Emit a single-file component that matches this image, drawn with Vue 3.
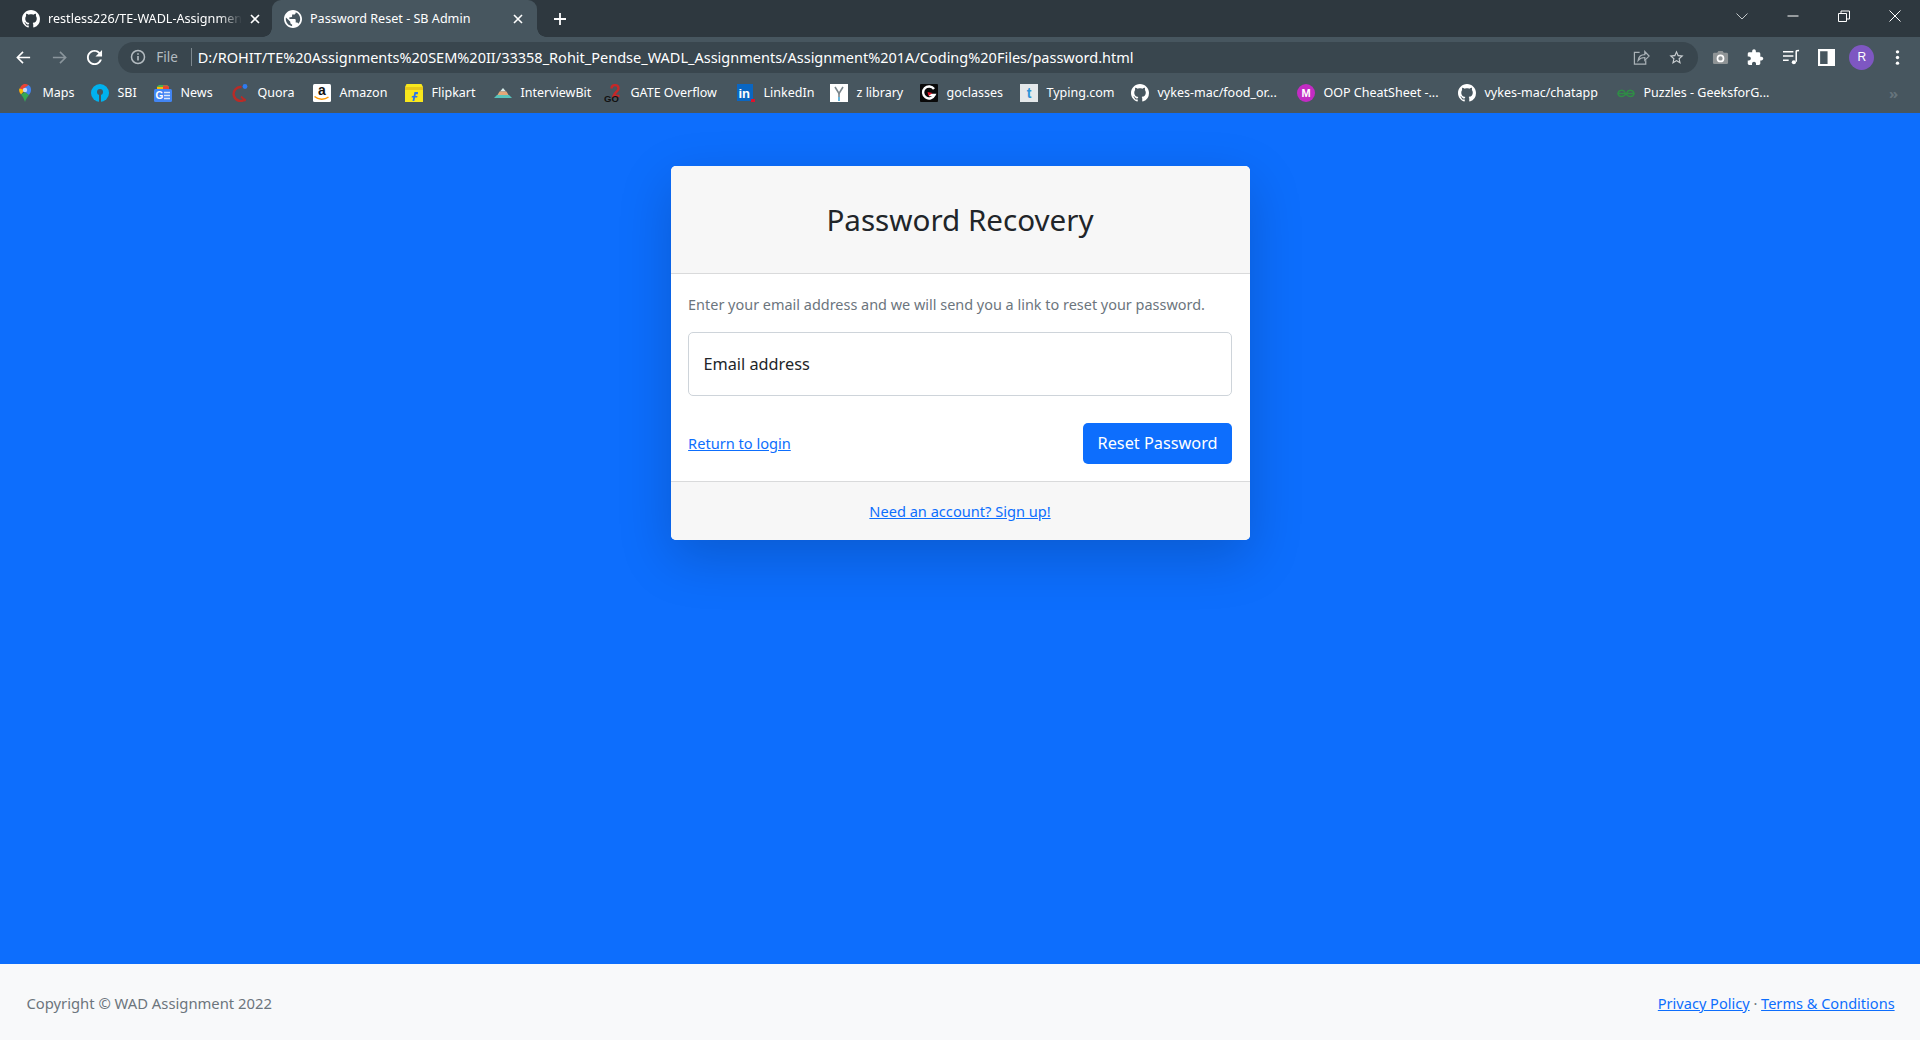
<script setup>
const github = 'M8 0C3.58 0 0 3.58 0 8c0 3.54 2.29 6.53 5.47 7.59.4.07.55-.17.55-.38 0-.19-.01-.82-.01-1.49-2.01.37-2.53-.49-2.69-.94-.09-.23-.48-.94-.82-1.13-.28-.15-.68-.52-.01-.53.63-.01 1.08.58 1.23.82.72 1.21 1.87.87 2.33.66.07-.52.28-.87.51-1.07-1.78-.2-3.64-.89-3.64-3.95 0-.87.31-1.59.82-2.15-.08-.2-.36-1.02.08-2.12 0 0 .67-.21 2.2.82.64-.18 1.32-.27 2-.27.68 0 1.36.09 2 .27 1.53-1.04 2.2-.82 2.2-.82.44 1.1.16 1.92.08 2.12.51.56.82 1.27.82 2.15 0 3.07-1.87 3.75-3.65 3.95.29.25.54.73.54 1.48 0 1.07-.01 1.93-.01 2.2 0 .21.15.46.55.38A8.013 8.013 0 0016 8c0-4.42-3.58-8-8-8z'

const bookmarks = [
  { icon: 'maps', label: 'Maps', w: 75 },
  { icon: 'sbi', label: 'SBI', w: 63 },
  { icon: 'news', label: 'News', w: 77 },
  { icon: 'quora', label: 'Quora', w: 82 },
  { icon: 'amazon', label: 'Amazon', w: 92 },
  { icon: 'flipkart', label: 'Flipkart', w: 89 },
  { icon: 'ib', label: 'InterviewBit', w: 110 },
  { icon: 'gate', label: 'GATE Overflow', w: 133 },
  { icon: 'linkedin', label: 'LinkedIn', w: 93 },
  { icon: 'zlib', label: 'z library', w: 90 },
  { icon: 'go', label: 'goclasses', w: 100 },
  { icon: 'typing', label: 'Typing.com', w: 111 },
  { icon: 'github', label: 'vykes-mac/food_or...', w: 166 },
  { icon: 'oop', label: 'OOP CheatSheet -...', w: 161 },
  { icon: 'github', label: 'vykes-mac/chatapp', w: 159 },
  { icon: 'gfg', label: 'Puzzles - GeeksforG...', w: 200 }
]
</script>

<template>
  <div class="page">
    <header class="chrome">
      <div class="tabstrip">
        <div class="tab">
          <svg class="tab-icon" viewBox="0 0 16 16"><path :d="github" fill="#fff" /></svg>
          <span class="tab-title fade">restless226/TE-WADL-Assignmen</span>
          <svg class="tab-close" viewBox="0 0 10 10"><path d="M1 1l8 8M9 1l-8 8" /></svg>
        </div>
        <div class="tab active">
          <svg class="tab-icon" viewBox="2 2 20 20"><path fill="#fff" d="M12 2C6.48 2 2 6.48 2 12s4.48 10 10 10 10-4.48 10-10S17.52 2 12 2zm-1 17.93c-3.95-.49-7-3.85-7-7.93 0-.62.08-1.21.21-1.79L9 15v1c0 1.1.9 2 2 2v1.93zm6.9-2.54c-.26-.81-1-1.39-1.9-1.39h-1v-3c0-.55-.45-1-1-1H8v-2h2c.55 0 1-.45 1-1V7h2c1.1 0 2-.9 2-2v-.41c2.93 1.19 5 4.06 5 7.41 0 2.08-.8 3.97-2.1 5.39z" /></svg>
          <span class="tab-title">Password Reset - SB Admin</span>
          <svg class="tab-close" viewBox="0 0 10 10"><path d="M1 1l8 8M9 1l-8 8" /></svg>
        </div>
        <svg class="new-tab" viewBox="0 0 14 14"><path d="M7 1v12M1 7h12" /></svg>
        <div class="win-controls">
          <svg class="win" viewBox="0 0 14 14"><path d="M1.500 4.500L7 10l5.500-5.500" /></svg>
          <svg class="win" viewBox="0 0 14 14"><path d="M1.500 7h11" /></svg>
          <svg class="win" viewBox="0 0 14 14"><path d="M1.500 4.500h8v8h-8zM4 4.500V2h8.500v8H9.500" /></svg>
          <svg class="win" viewBox="0 0 14 14"><path d="M1.500 1.500l11 11M12.500 1.500l-11 11" /></svg>
        </div>
      </div>

      <div class="toolbar">
        <button class="tool">
          <svg viewBox="0 0 18 18" class="stroke"><path d="M16 9H2.500M8.500 3L2.500 9l6 6" /></svg>
        </button>
        <button class="tool">
          <svg viewBox="0 0 18 18" class="stroke dim"><path d="M2 9h13.500M9.500 3l6 6-6 6" /></svg>
        </button>
        <button class="tool">
          <svg viewBox="3 3 18 18"><path fill="#fff" d="M17.650 6.350C16.200 4.900 14.210 4 12 4c-4.420 0-7.990 3.580-7.990 8s3.570 8 7.990 8c3.730 0 6.840-2.550 7.730-6h-2.080c-.82 2.330-3.040 4-5.650 4-3.310 0-6-2.690-6-6s2.690-6 6-6c1.660 0 3.140.69 4.220 1.780L13 11h7V4l-2.350 2.350z" /></svg>
        </button>

        <div class="omnibox">
          <svg class="info" viewBox="0 0 16 16">
            <circle cx="8" cy="8" r="6.500" fill="none" stroke="#b4bcc1" stroke-width="1.500" />
            <path d="M8 7v4.500M8 4.300v1.400" stroke="#b4bcc1" stroke-width="1.600" />
          </svg>
          <span class="scheme">File</span>
          <span class="sep"></span>
          <span class="url">D:/ROHIT/TE%20Assignments%20SEM%20II/33358_Rohit_Pendse_WADL_Assignments/Assignment%201A/Coding%20Files/password.html</span>
          <svg class="omni-icon" viewBox="0 0 18 18" fill="none" stroke="#aab2b7" stroke-width="1.300">
            <path d="M7 3.500H1.500v12.500h12v-4" />
            <path d="M5.500 12c.5-4 3-6 7-6V2.800L17 7.500l-4.500 4.500V9c-3 0-5.500 1-7 3z" />
          </svg>
          <svg class="omni-icon star" viewBox="0 0 24 24"><path fill="#c9ced1" d="M22 9.240l-7.190-.62L12 2 9.190 8.630 2 9.240l5.460 4.730L5.820 21 12 17.270 18.180 21l-1.630-7.030L22 9.240zM12 15.400l-3.760 2.270 1-4.280-3.320-2.880 4.380-.38L12 6.100l1.710 4.040 4.380.38-3.320 2.880 1 4.280L12 15.400z" /></svg>
        </div>

        <div class="extensions">
          <button class="tool">
            <svg viewBox="0 0 18 16"><path fill="#8f9496" d="M2.500 3h3l1.300-2h4.400l1.300 2h3A1.500 1.500 0 0 1 17 4.500v9a1.500 1.500 0 0 1-1.500 1.500h-13A1.500 1.500 0 0 1 1 13.500v-9A1.500 1.500 0 0 1 2.500 3z" /><circle cx="9" cy="9" r="3.200" fill="none" stroke="#fff" stroke-width="1.800" /></svg>
          </button>
          <button class="tool">
            <svg viewBox="1 1 23 22"><path fill="#fff" d="M20.500 11H19V7c0-1.100-.9-2-2-2h-4V3.500C13 2.120 11.880 1 10.500 1S8 2.120 8 3.500V5H4c-1.100 0-1.990.9-1.990 2v3.800H3.500c1.490 0 2.700 1.210 2.700 2.700s-1.210 2.700-2.700 2.700H2V20c0 1.100.9 2 2 2h3.800v-1.500c0-1.490 1.210-2.700 2.700-2.700 1.490 0 2.700 1.210 2.700 2.700V22H17c1.100 0 2-.9 2-2v-4h1.500c1.380 0 2.500-1.120 2.500-2.500S21.880 11 20.500 11z" /></svg>
          </button>
          <button class="tool">
            <svg viewBox="0 0 18 16" fill="none" stroke="#fff" stroke-width="1.600">
              <path d="M0 2h11M0 6.500h11M0 11h6" />
              <path d="M14 12.500V1.500c0-.6.6-.8 3-.8" />
              <circle cx="11.500" cy="13" r="2.200" fill="#fff" stroke="none" />
            </svg>
          </button>
          <button class="tool">
            <svg viewBox="0 0 16 16"><path fill="#fff" fill-rule="evenodd" d="M0 0h16v16H0zM2 2v12h7V2z" /></svg>
          </button>
          <button class="tool">
            <span class="avatar">R</span>
          </button>
          <button class="tool">
            <svg viewBox="0 0 18 18"><circle cx="9" cy="3" r="1.800" fill="#fff" /><circle cx="9" cy="9" r="1.800" fill="#fff" /><circle cx="9" cy="15" r="1.800" fill="#fff" /></svg>
          </button>
        </div>
      </div>

      <div class="bookmarks">
        <a v-for="b in bookmarks" :key="b.label" class="bookmark" :style="{ width: b.w + 'px' }">
          <svg class="bm-icon" viewBox="0 0 18 18">
            <g v-if="b.icon === 'maps'">
              <path d="M3.800 9L9 3.500 13 1.500C11.800.5 10.500 0 9 0 6.500 0 3 2.500 3.800 9z" fill="#ea4335" />
              <path d="M3.300 4.500C2.800 7 3.600 8.500 5 10.500L9 6z" fill="#fbbc04" />
              <path d="M5 10.500c1.500 2 3 3.500 4 7.500 1-3.500 2.500-5 4-7L9 8z" fill="#34a853" />
              <path d="M9 3.500L12.500 1C14.500 2.500 15 4 15 6c0 2-1 3.500-2 5L9 8z" fill="#4285f4" />
              <circle cx="9" cy="6" r="2.200" fill="#c9d6f5" />
            </g>
            <g v-else-if="b.icon === 'sbi'">
              <circle cx="9" cy="9" r="9" fill="#00b1ee" />
              <circle cx="9" cy="8" r="3" fill="#47565f" />
              <rect x="8" y="9" width="2" height="9" fill="#47565f" />
            </g>
            <g v-else-if="b.icon === 'news'">
              <path d="M3 5V2.500L5 1h8l2 1.500V5z" fill="#4caf50" />
              <path d="M3 5V3h7v2z" fill="#fbbc04" />
              <path d="M9 5V1.500h4.500L15 3v2z" fill="#e74335" />
              <rect y="5" width="18" height="13" rx="1.500" fill="#4285f4" />
              <text x="1.500" y="15" class="news-g">G</text>
              <path d="M10 8.500h6M10 11.500h6M10 14.500h6" stroke="#dbe6fb" stroke-width="1.500" />
            </g>
            <g v-else-if="b.icon === 'quora'">
              <path d="M10.500 3A7 7 0 1 0 14.500 15" fill="none" stroke="#b92b27" stroke-width="2.400" />
              <path d="M10 12.500l4.500 4.500" stroke="#b92b27" stroke-width="1.800" />
              <circle cx="14" cy="2.500" r="2.400" fill="#2f7bf0" />
            </g>
            <g v-else-if="b.icon === 'amazon'">
              <rect width="18" height="18" rx="1.500" fill="#fff" />
              <text x="9" y="11" class="amz">a</text>
              <path d="M1.500 12.500c4 3.500 10 3.500 14 .5" fill="none" stroke="#f90" stroke-width="1.500" />
            </g>
            <g v-else-if="b.icon === 'flipkart'">
              <path d="M0 3L1.500 0h15L18 3v15H0z" fill="#f8e71c" />
              <path d="M0 3h18v3H0z" fill="#e8c71a" />
              <path d="M13 8h-3.500L8.600 12H7l-.4 1.500h1.700L7.500 17h1.800l.8-3.500h2l.4-1.500h-2l.3-1.700h2z" fill="#2874f0" />
            </g>
            <g v-else-if="b.icon === 'ib'">
              <path d="M9 4l3 3.500H6z" fill="#d7ebe9" />
              <path d="M5.500 7.500h7L14.500 11h-11z" fill="#e4a878" />
              <path d="M3 11h12l3 3H0z" fill="#58c4bb" />
            </g>
            <g v-else-if="b.icon === 'gate'">
              <path d="M7.500 4.500c0-4.500 7-4.500 7 0 0 2.500-3.500 3.500-5 7.500h6" fill="none" stroke="#c62828" stroke-width="2.400" />
              <text x="0" y="18" class="gate-t">GO</text>
            </g>
            <g v-else-if="b.icon === 'linkedin'">
              <rect width="16" height="17" fill="#0a66c2" />
              <text x="1.500" y="14" class="li-t">in</text>
              <rect x="14" y="15" width="4" height="3" fill="#e0102a" />
            </g>
            <g v-else-if="b.icon === 'zlib'">
              <rect width="18" height="18" fill="#fff" />
              <path d="M5 3l4 6.500L13 3" fill="none" stroke="#7a868c" stroke-width="1.600" />
              <path d="M9 9v4" stroke="#7a868c" stroke-width="1.600" />
              <path d="M9 13v4" stroke="#42a5d5" stroke-width="1.600" />
            </g>
            <g v-else-if="b.icon === 'go'">
              <rect width="18" height="18" rx="1" fill="#0a0a0a" />
              <path d="M14 5A6 6 0 1 0 14.500 11H9" fill="none" stroke="#fff" stroke-width="2.400" />
              <path d="M7.500 8l5 1-4 3z" fill="#e01a2b" />
            </g>
            <g v-else-if="b.icon === 'typing'">
              <rect width="18" height="18" fill="#e4e8ea" />
              <text x="9" y="14" class="ty-t">t</text>
            </g>
            <path v-else-if="b.icon === 'github'" :d="github" transform="scale(1.125)" fill="#fff" />
            <g v-else-if="b.icon === 'oop'">
              <circle cx="9" cy="9" r="9" fill="#c32bc4" />
              <text x="9" y="13" class="oop-t">M</text>
            </g>
            <g v-else-if="b.icon === 'gfg'" fill="none" stroke="#2f8d46" stroke-width="1.500">
              <path d="M9 9.500H1c.5-4 6-4 7-1M9 9.500h8c-.5-4-6-4-7-1" />
              <path d="M1 9.500c.5 4 6 4 8 0 2 4 7.500 4 8 0" />
            </g>
          </svg>
          <span class="bm-label">{{ b.label }}</span>
        </a>
        <span class="more">»</span>
      </div>
    </header>

    <div class="layout">
      <main class="content">
        <div class="card">
          <div class="card-header">
            <h3>Password Recovery</h3>
          </div>
          <div class="card-body">
            <div class="hint">Enter your email address and we will send you a link to reset your password.</div>
            <input class="email" type="email" placeholder="Email address" />
            <div class="actions">
              <a class="link small" href="#">Return to login</a>
              <a class="btn" href="#">Reset Password</a>
            </div>
          </div>
          <div class="card-footer">
            <a class="link small" href="#">Need an account? Sign up!</a>
          </div>
        </div>
      </main>

      <footer class="site-footer">
        <div class="muted">Copyright © WAD Assignment 2022</div>
        <div class="muted legal">
          <a class="link" href="#">Privacy Policy</a>
          &middot;
          <a class="link" href="#">Terms &amp; Conditions</a>
        </div>
      </footer>
    </div>
  </div>
</template>

<style scoped>
.page {
  display: flex;
  flex-direction: column;
  height: 1040px;
  overflow: hidden;
  font-family: "Noto Sans", "Liberation Sans", sans-serif;
}

.chrome {
  flex: none;
  color: #fff;
  background: #47565f;
}

.tabstrip {
  display: flex;
  align-items: stretch;
  height: 37px;
  padding-left: 8px;
  background: #2e383f;
}

.tab {
  display: flex;
  flex: none;
  align-items: center;
  box-sizing: border-box;
  width: 264px;
  padding: 0 12px 0 14px;
  gap: 8px;
  font-size: 12.600px;
}

.tab.active {
  position: relative;
  width: 265px;
  padding: 0 14px 0 12px;
  background: #47565f;
  border-radius: 9px 9px 0 0;
}

.tab.active::before,
.tab.active::after {
  content: "";
  position: absolute;
  bottom: 0;
  width: 9px;
  height: 9px;
}

.tab.active::before {
  left: -9px;
  background: radial-gradient(circle at 0 0, transparent 8.500px, #47565f 9px);
}

.tab.active::after {
  right: -9px;
  background: radial-gradient(circle at 100% 0, transparent 8.500px, #47565f 9px);
}

.tab-icon {
  flex: none;
  width: 18px;
  height: 18px;
}

.tab-title {
  flex: 1;
  min-width: 0;
  white-space: nowrap;
}

.fade {
  -webkit-mask-image: linear-gradient(90deg, #000 88%, transparent);
  mask-image: linear-gradient(90deg, #000 88%, transparent);
}

.tab-close {
  flex: none;
  width: 10px;
  height: 10px;
  fill: none;
  stroke: #fff;
  stroke-width: 1.600;
}

.new-tab {
  align-self: center;
  width: 14px;
  height: 14px;
  margin-left: 16px;
  fill: none;
  stroke: #fff;
  stroke-width: 1.800;
}

.win-controls {
  display: flex;
  align-items: center;
  gap: 37px;
  margin-left: auto;
  padding-right: 18px;
  padding-bottom: 6px;
}

.win {
  width: 14px;
  height: 14px;
  fill: none;
  stroke: #fff;
  stroke-width: 1;
}

.win:first-child {
  stroke: #c3c8cb;
}

.toolbar {
  display: flex;
  align-items: center;
  box-sizing: border-box;
  height: 38px;
  padding: 2px 5px 0 6px;
}

.tool {
  display: flex;
  flex: none;
  align-items: center;
  justify-content: center;
  width: 35.400px;
  height: 30px;
  padding: 0;
  border: 0;
  background: none;
}

.tool svg {
  width: 17px;
  height: 17px;
}

.stroke {
  fill: none;
  stroke: #fff;
  stroke-width: 1.700;
}

.stroke.dim {
  stroke: #8a959c;
}

.omnibox {
  display: flex;
  flex: 1;
  align-items: center;
  height: 31px;
  margin-left: 6px;
  padding: 0 11px 0 12px;
  border-radius: 16px;
  background: #39464e;
  font-size: 14.500px;
}

.info {
  flex: none;
  width: 16px;
  height: 16px;
  margin-right: 10px;
}

.scheme {
  color: #b4bcc1;
  font-size: 13.500px;
}

.sep {
  width: 1px;
  height: 18px;
  margin: 0 6px 0 13px;
  background: #7d888f;
}

.url {
  flex: 1;
  white-space: nowrap;
}

.omni-icon {
  flex: none;
  width: 17px;
  height: 17px;
  margin-right: 18px;
}

.omni-icon.star {
  margin-right: 2px;
}

.extensions {
  display: flex;
  margin-left: 5px;
}

.avatar {
  display: flex;
  align-items: center;
  justify-content: center;
  width: 25px;
  height: 25px;
  border-radius: 50%;
  background: #7e57c2;
  color: #fff;
  font-size: 12px;
}

.bookmarks {
  display: flex;
  align-items: center;
  box-sizing: border-box;
  height: 38px;
  padding: 0 0 3px 16px;
  font-size: 12.500px;
}

.bookmark {
  display: flex;
  flex: none;
  align-items: center;
  gap: 8.500px;
  white-space: nowrap;
}

.bm-icon {
  flex: none;
  width: 18px;
  height: 18px;
}

.more {
  margin-left: 72px;
  color: #66747c;
  font-size: 15px;
  font-weight: 700;
}

.news-g {
  fill: #fff;
  font: 700 10px "Liberation Sans", sans-serif;
}

.amz {
  fill: #111;
  font: 700 14px "Liberation Sans", sans-serif;
  text-anchor: middle;
}

.gate-t {
  fill: #111;
  font: 700 9.500px "Liberation Sans", sans-serif;
}

.li-t {
  fill: #fff;
  font: 700 13px "Liberation Sans", sans-serif;
}

.ty-t {
  fill: #2d94d6;
  font: 700 14px "Liberation Sans", sans-serif;
  text-anchor: middle;
}

.oop-t {
  fill: #fff;
  font: 700 11px "Liberation Sans", sans-serif;
  text-anchor: middle;
}

.layout {
  display: flex;
  flex: 1;
  flex-direction: column;
  min-height: 0;
  background: #0d6efd;
}

.content {
  flex: 1;
  padding-top: 52.800px;
}

.card {
  width: 579px;
  margin: 0 auto;
  border-radius: 5px;
  background: #fff;
  color: #212529;
  box-shadow: 0 17.600px 52.800px rgba(0, 0, 0, 0.175);
}

.card-header {
  padding: 8.800px 17.600px;
  border-bottom: 1px solid #d9dadb;
  border-radius: 5px 5px 0 0;
  background: #f7f7f7;
}

h3 {
  margin: 26.400px 0;
  font-size: 29.600px;
  font-weight: 400;
  line-height: 37px;
  text-align: center;
}

.card-body {
  padding: 18.400px 17.600px 17.600px;
}

.hint {
  margin-bottom: 16.800px;
  color: #6c757d;
  font-size: 14.450px;
  line-height: 23.100px;
  white-space: nowrap;
}

.email {
  display: block;
  box-sizing: border-box;
  width: 100%;
  height: 64px;
  padding: 0 14.300px;
  border: 1px solid #ced4da;
  border-radius: 5px;
  outline: none;
  font: inherit;
  font-size: 16.300px;
}

.email::placeholder {
  color: #212529;
  opacity: 1;
}

.actions {
  display: flex;
  align-items: center;
  justify-content: space-between;
  margin-top: 26.400px;
}

.link {
  color: #0d6efd;
}

.small {
  font-size: 14.600px;
}

.btn {
  padding: 0 14.300px;
  border-radius: 5px;
  background: #0d6efd;
  color: #fff;
  font-size: 16.300px;
  line-height: 41px;
  text-decoration: none;
}

.card-footer {
  padding: 17.800px 17.600px 16.400px;
  border-top: 1px solid #d9dadb;
  border-radius: 0 0 5px 5px;
  background: #f7f7f7;
  line-height: 23.100px;
  text-align: center;
}

.site-footer {
  display: flex;
  flex: none;
  align-items: center;
  justify-content: space-between;
  padding: 27.400px 25.400px 25.400px 26.400px;
  background: #f8f9fa;
  font-size: 14.800px;
  line-height: 23.100px;
}

.muted {
  color: #6c757d;
}

.legal {
  font-size: 14.550px;
}
</style>

<style>
html,
body {
  margin: 0;
  background: #0d6efd;
}
</style>
